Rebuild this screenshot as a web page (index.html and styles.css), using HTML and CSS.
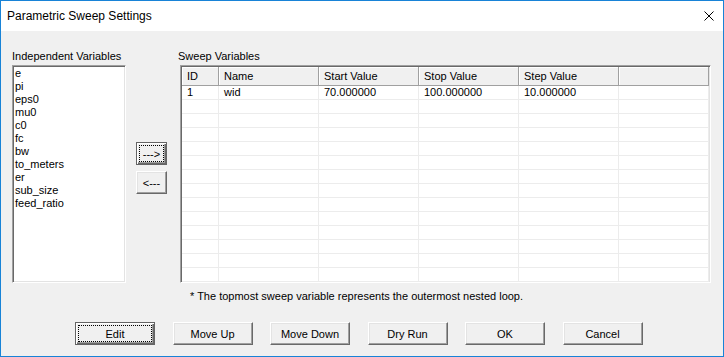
FILE: index.html
```html
<!DOCTYPE html>
<html lang="en">
<head>
  <meta charset="UTF-8" />
  <title>Parametric Sweep Settings</title>
  <link rel="stylesheet" href="styles.css">
</head>
<body>
  <div class="window">
    <div class="titlebar">
      <span>Parametric Sweep Settings</span>
      <svg class="close" width="10" height="10" viewBox="0 0 10 10">
        <path d="M0.5 0.5 L9.5 9.5 M9.5 0.5 L0.5 9.5" stroke="#000" stroke-width="1" fill="none" />
      </svg>
    </div>
    <div class="content">
      <div class="top">
        <div class="left">
          <div class="label">Independent Variables</div>
          <ul class="listbox">
            <li>e</li>
            <li>pi</li>
            <li>eps0</li>
            <li>mu0</li>
            <li>c0</li>
            <li>fc</li>
            <li>bw</li>
            <li>to_meters</li>
            <li>er</li>
            <li>sub_size</li>
            <li>feed_ratio</li>
          </ul>
        </div>
        <div class="arrows">
          <button class="btn default">---&gt;</button>
          <button class="btn">&lt;---</button>
        </div>
        <div class="right">
          <div class="label">Sweep Variables</div>
          <div class="grid">
            <div class="row head">
              <div class="cell">ID</div>
              <div class="cell">Name</div>
              <div class="cell">Start Value</div>
              <div class="cell">Stop Value</div>
              <div class="cell">Step Value</div>
              <div class="cell"></div>
            </div>
            <div id="rows"></div>
          </div>
        </div>
      </div>
      <p class="note">* The topmost sweep variable represents the outermost nested loop.</p>
      <div class="buttons">
        <button class="btn default">Edit</button>
        <button class="btn">Move Up</button>
        <button class="btn">Move Down</button>
        <button class="btn">Dry Run</button>
        <button class="btn">OK</button>
        <button class="btn">Cancel</button>
      </div>
    </div>
  </div>

  <script>
    const sweeps = [
      ["1", "wid", "70.000000", "100.000000", "10.000000", ""]
    ];

    const rows = document.getElementById("rows");
    for (let i = 0; i < 14; i++) {
      const row = document.createElement("div");
      row.className = "row";
      const data = sweeps[i] || ["", "", "", "", "", ""];
      data.forEach(text => {
        const cell = document.createElement("div");
        cell.className = "cell";
        cell.textContent = text;
        row.appendChild(cell);
      });
      rows.appendChild(row);
    }
  </script>
</body>
</html>
```

FILE: styles.css
```css
body {
  margin: 0;
  font-family: "Liberation Sans", Arial, sans-serif;
  font-size: 11px;
  color: #000;
}
.window {
  width: 724px;
  height: 357px;
  box-sizing: border-box;
  border: 1px solid #1883d7;
  display: flex;
  flex-direction: column;
}
.titlebar {
  height: 30px;
  flex: none;
  background: #fff;
  display: flex;
  align-items: center;
  justify-content: space-between;
  padding: 0 9px 0 6px;
  font-size: 12px;
}
.content {
  flex: 1;
  background: #f0f0f0;
  padding: 19px 12px 0 11px;
}
.top {
  display: flex;
  height: 233px;
}
.left {
  width: 114px;
  display: flex;
  flex-direction: column;
}
.label {
  height: 13px;
  line-height: 13px;
  margin-bottom: 2px;
  white-space: nowrap;
}
.listbox {
  flex: 1;
  margin: 0;
  padding: 0;
  list-style: none;
  background: #fff;
  border: 1px solid;
  border-color: #a0a0a0 #fff #fff #a0a0a0;
  box-shadow: inset 1px 1px #696969, inset -1px -1px #e3e3e3;
  padding: 1px 0 0 2px;
}
.listbox li {
  line-height: 13px;
  height: 13px;
}
.arrows {
  display: flex;
  flex-direction: column;
  gap: 6px;
  margin: 92px 11px 0 10px;
}
.arrows .btn {
  width: 31px;
}
.right {
  flex: 1;
  display: flex;
  flex-direction: column;
}
.grid {
  flex: 1;
  margin-left: 2px;
  background: #fff;
  overflow: hidden;
  border: 1px solid;
  border-color: #a0a0a0 #fff #fff #a0a0a0;
  box-shadow: inset 1px 1px #696969, inset -1px -1px #e3e3e3;
  padding: 1px 1px 1px 1px;
}
.row {
  display: grid;
  grid-template-columns: 37px 100px 100px 100px 100px 90px;
}
.cell {
  box-sizing: border-box;
  height: 14px;
  line-height: 13px;
  padding-left: 5px;
  border-right: 1px solid #ececec;
  border-bottom: 1px solid #ececec;
  white-space: nowrap;
}
.head .cell {
  height: 19px;
  line-height: 18px;
  background: #f0f0f0;
  border-right: 1px solid #a0a0a0;
  border-bottom: 1px solid #a0a0a0;
  box-shadow: inset 1px 1px #fff;
}
.note {
  margin: 7px 0 0 178px;
  line-height: 13px;
  white-space: nowrap;
}
.buttons {
  display: flex;
  gap: 17.5px;
  margin-top: 19px;
  padding-left: 63px;
}
.btn {
  width: 80px;
  height: 23px;
  padding: 0;
  font: inherit;
  color: #000;
  background: #f0f0f0;
  border: 1px solid;
  border-color: #fff #696969 #696969 #fff;
  box-shadow: inset -1px -1px #a0a0a0, inset 1px 1px #e3e3e3;
}
.btn.default {
  border-color: #646464;
  box-shadow: inset 1px 1px #fff, inset -1px -1px #696969, inset -2px -2px #a0a0a0;
  outline: 1px dotted #000;
  outline-offset: -4px;
}
```
